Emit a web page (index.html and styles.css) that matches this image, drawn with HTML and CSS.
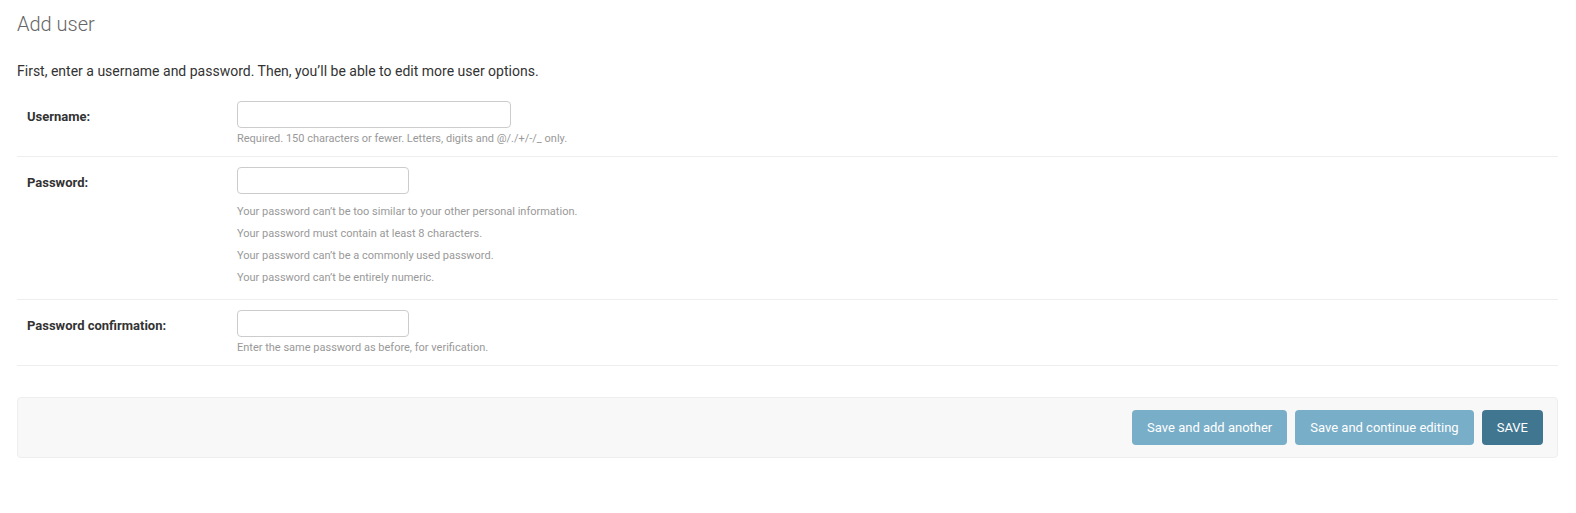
FILE: index.html
```html
<!DOCTYPE html>
<html lang="en">
<head>
<meta charset="utf-8">
<title>Add user</title>
<link rel="stylesheet" href="styles.css">
</head>
<body>
<div class="content">
  <h1 class="title">Add user</h1>
  <p class="intro">First, enter a username and password. Then, you’ll be able to edit more user options.</p>
  <form class="user-form">
    <fieldset class="module">
      <div class="form-row">
        <label class="field-label" for="id_username">Username:</label>
        <div class="field-body">
          <input class="text-input input-wide" type="text" id="id_username">
          <div class="help">Required. 150 characters or fewer. Letters, digits and @/./+/-/_ only.</div>
        </div>
      </div>
      <div class="form-row">
        <label class="field-label" for="id_password1">Password:</label>
        <div class="field-body">
          <input class="text-input input-narrow" type="password" id="id_password1">
          <ul class="help-list">
            <li>Your password can’t be too similar to your other personal information.</li>
            <li>Your password must contain at least 8 characters.</li>
            <li>Your password can’t be a commonly used password.</li>
            <li>Your password can’t be entirely numeric.</li>
          </ul>
        </div>
      </div>
      <div class="form-row">
        <label class="field-label" for="id_password2">Password confirmation:</label>
        <div class="field-body">
          <input class="text-input input-narrow" type="password" id="id_password2">
          <div class="help">Enter the same password as before, for verification.</div>
        </div>
      </div>
    </fieldset>
    <div class="submit-row">
      <button type="button" class="btn">Save and add another</button>
      <button type="button" class="btn">Save and continue editing</button>
      <button type="button" class="btn btn-default">SAVE</button>
    </div>
  </form>
</div>
</body>
</html>
```
FILE: styles.css
```css
html, body {
  margin: 0;
  padding: 0;
  background: #fff;
}
body {
  font-family: Roboto, "Liberation Sans", Arial, sans-serif;
  color: #333;
  font-size: 14px;
}
.content {
  padding: 12px 18px 20px 17px;
}
.title {
  margin: 0;
  font-size: 20px;
  line-height: 24px;
  font-weight: 300;
  color: #666;
}
.intro {
  margin: 25px 0 10px;
  font-size: 14px;
  line-height: 20px;
  color: #333;
}
.user-form {
  margin: 0;
}
.module {
  margin: 0;
  padding: 0;
  border: none;
  min-width: 0;
}
.form-row {
  display: flex;
  padding: 10px;
  border-bottom: 1px solid #eee;
  font-size: 13px;
}
.field-label {
  flex: 0 0 210px;
  font-weight: bold;
  font-size: 13px;
  line-height: 27px;
  padding-top: 2px;
  color: #333;
}
.field-body {
  display: flex;
  flex-direction: column;
  align-items: flex-start;
}
.text-input {
  box-sizing: content-box;
  height: 15px;
  padding: 5px 6px;
  margin: 0;
  border: 1px solid #ccc;
  border-radius: 4px;
  font-family: Roboto, "Liberation Sans", Arial, sans-serif;
  font-size: 13px;
  background: #fff;
  color: #333;
}
.input-wide {
  width: 260px;
}
.input-narrow {
  width: 158px;
}
.help {
  margin-top: 4px;
  font-size: 11px;
  line-height: 14px;
  color: #999;
}
.help-list {
  list-style: none;
  margin: 7px 0 0;
  padding: 0;
  font-size: 11px;
  line-height: 14px;
  color: #999;
}
.help-list li {
  padding: 4px 0;
}
.submit-row {
  display: flex;
  justify-content: flex-end;
  gap: 8px;
  margin-top: 31px;
  padding: 12px 14px;
  background: #f8f8f8;
  border: 1px solid #eee;
  border-radius: 4px;
}
.btn {
  height: 35px;
  padding: 0 15px;
  border: none;
  border-radius: 4px;
  background: #79aec8;
  color: #fff;
  font-family: Roboto, "Liberation Sans", Arial, sans-serif;
  font-size: 13px;
  line-height: 15px;
  cursor: pointer;
}
.btn-default {
  background: #417690;
}
```
